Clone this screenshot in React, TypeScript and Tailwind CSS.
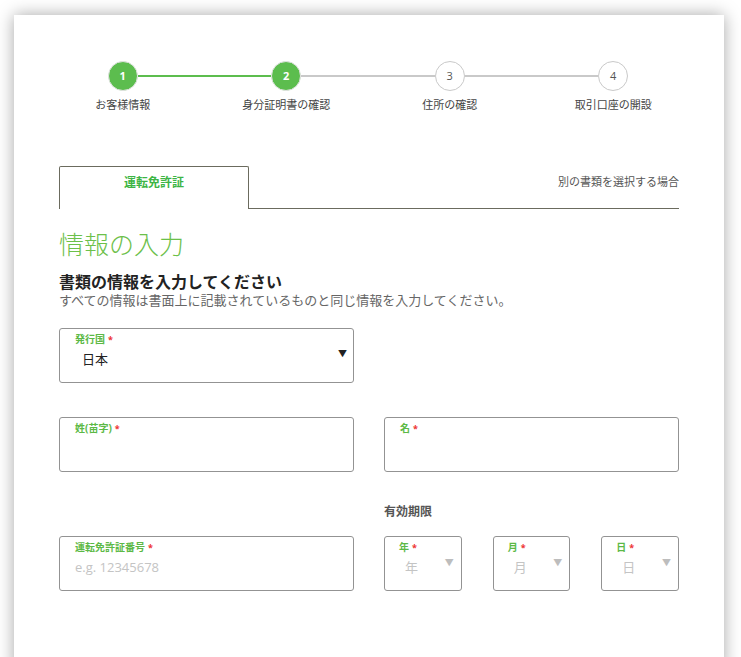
import { ReactNode } from "react";

const steps = [
  { num: "1", label: "お客様情報", done: true },
  { num: "2", label: "身分証明書の確認", done: true },
  { num: "3", label: "住所の確認", done: false },
  { num: "4", label: "取引口座の開設", done: false },
];

function Stepper() {
  return (
    <div className="grid grid-cols-4 pl-[27px] pr-[29px]">
      {steps.map((step, idx) => {
        const leftGreen = step.done;
        const rightGreen = idx + 1 < steps.length && steps[idx + 1].done;
        return (
          <div key={step.num} className="flex flex-col items-center">
            <div className="flex h-[30px] w-full items-center">
              <div
                className={
                  idx === 0
                    ? "h-[2px] flex-1"
                    : leftGreen
                      ? "h-[2px] flex-1 bg-[#5cbd4e]"
                      : "h-[2px] flex-1 bg-[#c9c9c9]"
                }
              />
              {step.done ? (
                <div className="flex h-[30px] w-[30px] items-center justify-center rounded-full border border-[#e2e2e2] bg-[#5cbd4e] text-[11px] font-bold text-white">
                  {step.num}
                </div>
              ) : (
                <div className="flex h-[30px] w-[30px] items-center justify-center rounded-full border border-[#c9c9c9] bg-white text-[11px] text-[#555]">
                  {step.num}
                </div>
              )}
              <div
                className={
                  idx === steps.length - 1
                    ? "h-[2px] flex-1"
                    : rightGreen
                      ? "h-[2px] flex-1 bg-[#5cbd4e]"
                      : "h-[2px] flex-1 bg-[#c9c9c9]"
                }
              />
            </div>
            <p className="mt-[7px] text-[11px] leading-[14px] text-[#444]">{step.label}</p>
          </div>
        );
      })}
    </div>
  );
}

function FieldLabel({ children }: { children: ReactNode }) {
  return (
    <p className="text-[10px] font-bold leading-[12px] text-[#5cb946]">
      {children}
      <span className="ml-[3px] text-[9px] text-[#ee3333]">*</span>
    </p>
  );
}

function Box({ children, className = "" }: { children: ReactNode; className?: string }) {
  return (
    <div
      className={`relative h-[55px] rounded-[3px] border border-[#939393] bg-white pt-[4px] ${className}`}
    >
      {children}
    </div>
  );
}

function DateSelect({ label }: { label: string }) {
  return (
    <Box className="pl-[14px]">
      <FieldLabel>{label}</FieldLabel>
      <p className="mt-[4px] pl-[6px] text-[13px] leading-[18px] text-[#c4c4c4]">{label}</p>
      <span className="absolute right-[7px] top-[19px] text-[9px] text-[#bdbdbd]">▼</span>
    </Box>
  );
}

export default function App() {
  return (
    <div className="min-h-screen bg-white pt-[15px] font-['Open_Sans','Noto_Sans_CJK_JP',sans-serif]">
      <div className="ml-[14px] w-[710px] bg-white pb-[80px] pt-[46px] shadow-[0_0_16px_rgba(0,0,0,0.35)]">
        <Stepper />

        <div className="mt-[54px] px-[45px]">
          <div className="flex">
            <div className="h-[43px] w-[190px] rounded-t-[2px] border border-b-0 border-[#6b6b5e] pt-[7px] text-center text-[12px] font-bold text-[#3db545]">
              運転免許証
            </div>
            <div className="flex-1 border-b border-[#6b6b5e] pt-[8px] text-right text-[11px] text-[#555]">
              別の書類を選択する場合
            </div>
          </div>

          <h1 className="mt-[20px] text-[25px] font-light leading-[30px] text-[#6cc04a]">
            情報の入力
          </h1>
          <h2 className="mt-[13px] text-[16px] font-bold leading-[20px] text-[#222]">
            書類の情報を入力してください
          </h2>
          <p className="text-[13px] leading-[16px] text-[#666]">
            すべての情報は書面上に記載されているものと同じ情報を入力してください。
          </p>

          <div className="mt-[20px] grid grid-cols-2 gap-x-[30px]">
            <Box className="pl-[15px]">
              <FieldLabel>発行国</FieldLabel>
              <p className="mt-[4px] pl-[7px] text-[13px] leading-[18px] text-[#222]">日本</p>
              <span className="absolute right-[6px] top-[18px] text-[9px] text-[#222]">▼</span>
            </Box>
            <div />
          </div>

          <div className="mt-[34px] grid grid-cols-2 gap-x-[30px]">
            <Box className="pl-[15px]">
              <FieldLabel>姓(苗字)</FieldLabel>
            </Box>
            <Box className="pl-[15px]">
              <FieldLabel>名</FieldLabel>
            </Box>
          </div>

          <div className="mt-[33px] grid grid-cols-2 gap-x-[30px]">
            <div />
            <p className="text-[12px] font-bold leading-[14px] text-[#555]">有効期限</p>
          </div>

          <div className="mt-[17px] grid grid-cols-2 gap-x-[30px]">
            <Box className="pl-[15px]">
              <FieldLabel>運転免許証番号</FieldLabel>
              <p className="mt-[4px] text-[13px] leading-[18px] text-[#c4c4c4]">e.g. 12345678</p>
            </Box>
            <div className="grid grid-cols-3 gap-x-[31px]">
              <DateSelect label="年" />
              <DateSelect label="月" />
              <DateSelect label="日" />
            </div>
          </div>
        </div>
      </div>
    </div>
  );
}
